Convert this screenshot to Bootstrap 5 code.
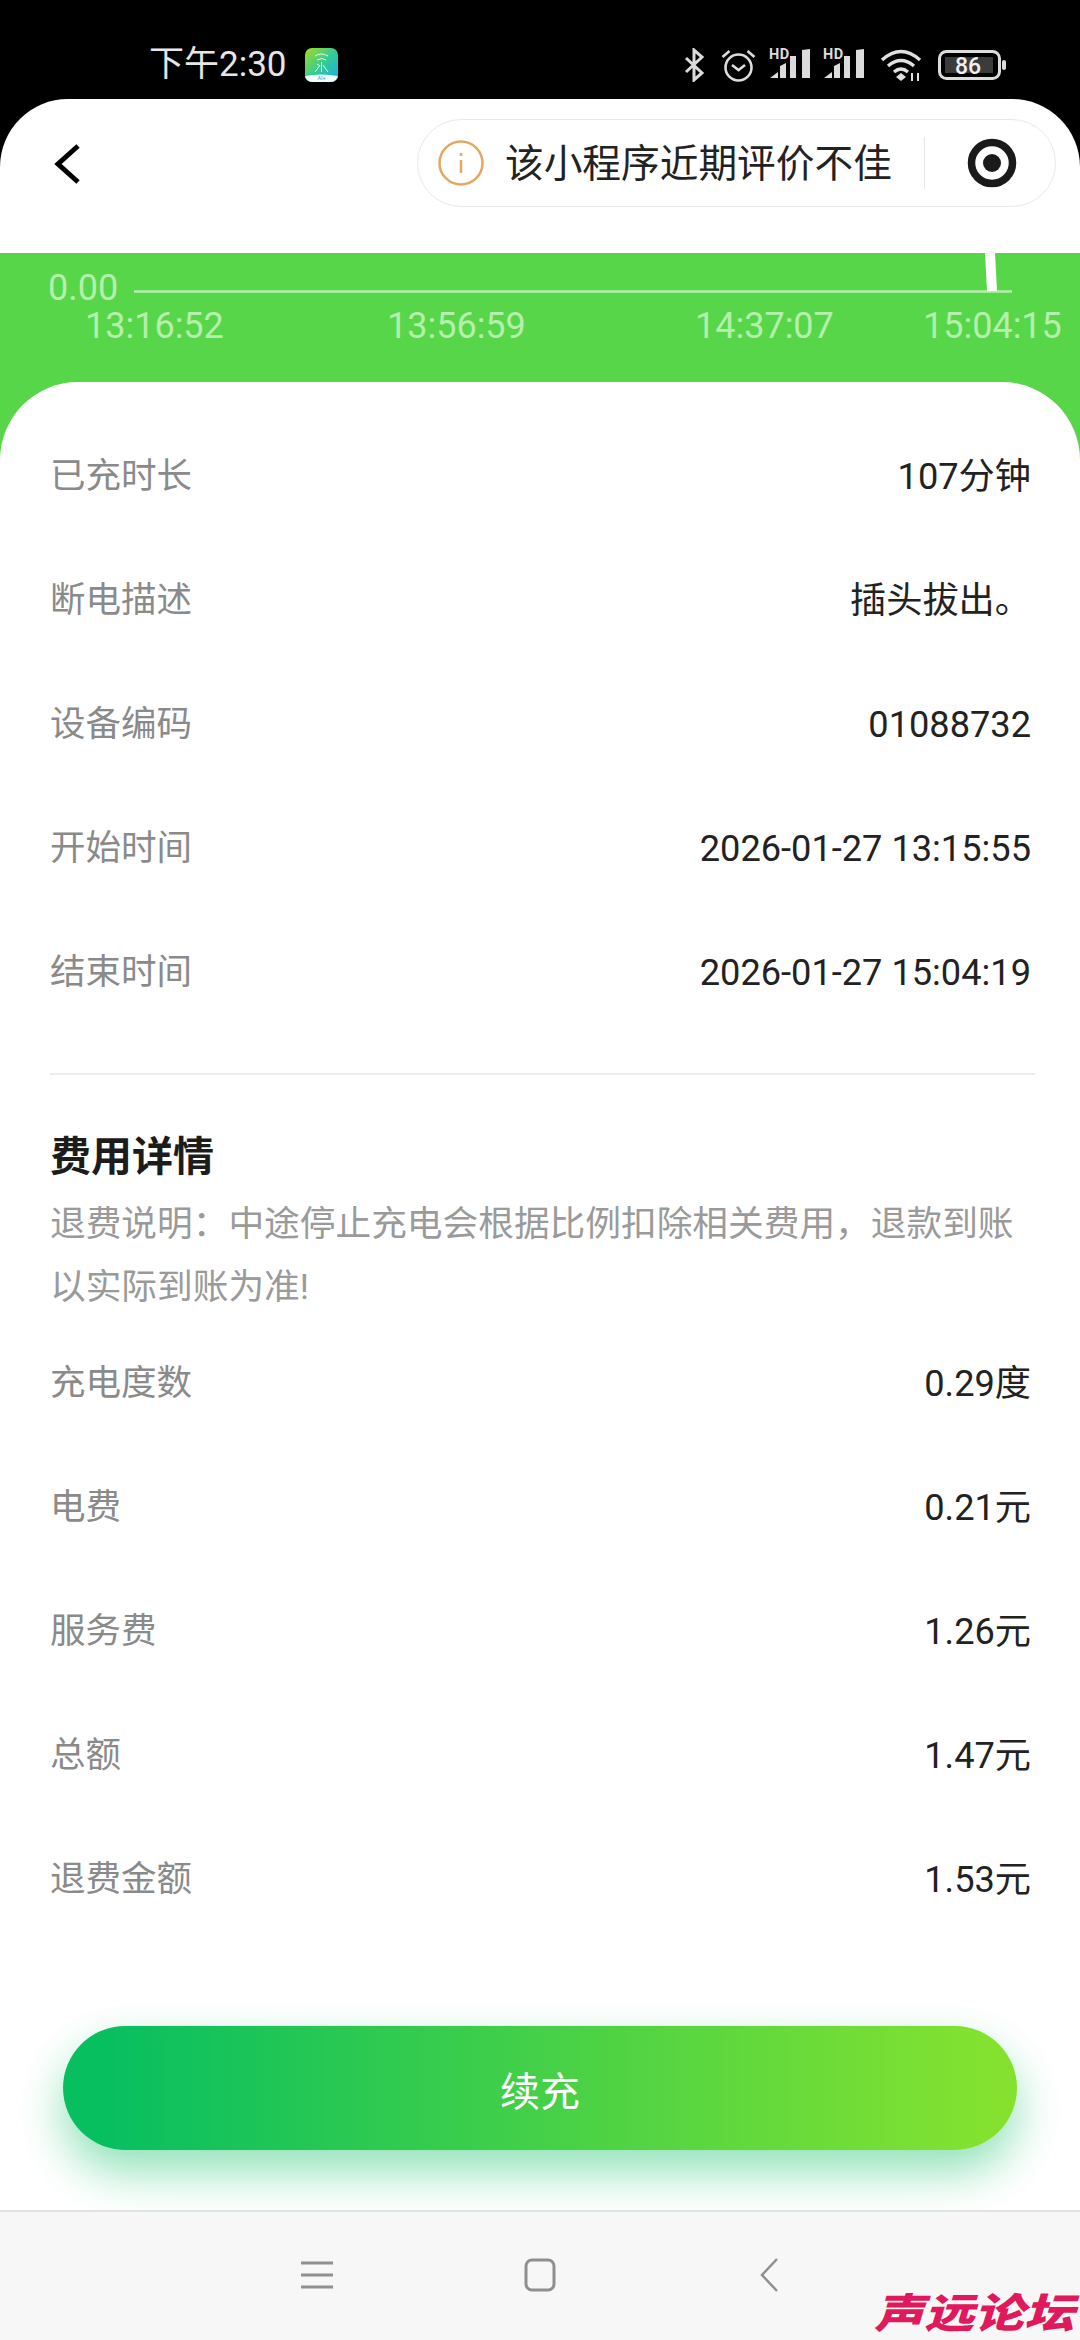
<!DOCTYPE html>
<html lang="zh">
<head>
    <meta charset="UTF-8">
    <title>订单详情</title>
    <meta name="viewport" content="width=device-width, initial-scale=1">
    <link href="https://cdn.jsdelivr.net/npm/bootstrap@5.3.3/dist/css/bootstrap.min.css" rel="stylesheet">
    <style>
        body { width: 1080px; height: 2340px; overflow: hidden; background: #000; font-family: Roboto, "Noto Sans CJK SC", sans-serif; }
        .status-bar { height: 99px; padding: 30px 73px 0 149px; color: #e6e6e6; }
        .status-time { font-size: 35px; line-height: 1; width: 156px; }
        .status-icons svg { display: block; }
        .status-icons svg:nth-child(2) { margin-left: 16px; }
        .status-icons svg:nth-child(3) { margin-left: 13px; margin-bottom: 3px; }
        .status-icons svg:nth-child(4) { margin-left: 12px; margin-bottom: 3px; }
        .status-icons svg:nth-child(5) { margin-left: 15px; }
        .status-icons svg:nth-child(6) { margin-left: 14px; }
        .top-bar { height: 154px; background: #fff; border-radius: 68px 68px 0 0; padding: 20px 24px 0 54px; align-items: flex-start; }
        .back-btn { margin-top: 25px; }
        .capsule { width: 639px; height: 88px; border: 1px solid #e9e9e9; border-radius: 44px; background: #fff; padding-left: 20px; }
        .capsule-text { font-size: 38.7px; color: #222; margin: 2px 0 0 21px; white-space: nowrap; line-height: 1; }
        .capsule-sep { width: 1px; height: 52px; background: #e6e6e6; margin-left: 32px; }
        .capsule-dot { margin-left: 42px; }
        .green-wrap { background: #58d64a; }
        .chart-box { height: 129px; }
        .chart-box svg { display: block; }
        .chart-label { font-size: 36px; fill: #b6efad; font-family: Roboto, sans-serif; }
        .sheet { height: 1828px; background: #fff; border-radius: 78px 78px 0 0; padding: 33px 49px 0 50px; }
        .info-row { height: 124px; font-size: 36.2px; color: #222; }
        .info-label { color: #8a8a8a; font-size: 35.5px; }
        .sheet-line { height: 2px; background: #ececec; margin: 38px -4px 0 0; }
        .fee-title { font-size: 41px; font-weight: 700; color: #1c1c1c; line-height: 60px; margin-top: 52px; }
        .fee-note { font-size: 35.7px; line-height: 63px; color: #9a9a9a; margin: 6px -8px 3px 0; }
        .renew-btn { width: 954px; height: 124px; margin: 84px 0 0 13px; padding-top: 15px; font-size: 40px; color: #fff; border: 0; background: linear-gradient(90deg, #08bf60 5%, #84e22f 97%); box-shadow: 0 22px 46px rgba(12, 190, 100, .45); }
        .renew-btn:hover { color: #fff; }
        .nav-strip { height: 130px; background: #f7f7f7; border-top: 2px solid #dfe3e3; padding-bottom: 2px; position: relative; }
        .nav-home { margin-left: 191px; }
        .nav-back { margin-left: 203px; }
        .forum-mark { position: absolute; right: 6px; bottom: 5px; font-size: 50px; line-height: 50px; font-weight: 900; font-style: italic; color: #e0185c; white-space: nowrap; transform: scaleY(.82); transform-origin: bottom; }
    </style>
</head>
<body class="position-relative">
    <!-- status bar -->
    <div class="status-bar d-flex align-items-center">
        <span class="status-time">下午2:30</span>
        <svg width="33" height="34" viewBox="0 0 33 34">
            <defs>
                <linearGradient id="appg" x1="0" y1="0" x2="1" y2="1">
                    <stop offset="0" stop-color="#a4dc1e"/>
                    <stop offset=".5" stop-color="#35cc94"/>
                    <stop offset="1" stop-color="#14aaf2"/>
                </linearGradient>
                <clipPath id="appc"><rect width="33" height="34" rx="7"/></clipPath>
            </defs>
            <g clip-path="url(#appc)">
                <rect width="33" height="34" fill="url(#appg)"/>
                <path d="M0 28q16-3 33 0v6H0z" fill="#f2fbfd"/>
            </g>
            <g fill="none" stroke="#e6f8ee" stroke-width="1">
                <path d="M10 8q6-4 13 0M12 12q5-3 9 0M16.500 14v10M15 17l-5 7M18 17l5 7M12 16l3 2"/>
            </g>
            <text x="16.500" y="32" text-anchor="middle" font-size="5.500" fill="#3aa6c8" font-family="Roboto, sans-serif">AI+</text>
        </svg>
        <div class="status-icons d-flex align-items-center ms-auto">
            <svg width="21" height="34" viewBox="0 0 21 34" fill="none" stroke="#dcdcdc" stroke-width="3">
                <path d="M2 10l16 15-8 7V2l8 7L2 24"/>
            </svg>
            <svg width="35" height="34" viewBox="0 0 35 34" fill="none" stroke="#dcdcdc" stroke-width="2.600">
                <circle cx="17.500" cy="19.500" r="13"/>
                <path d="M11 17l6.500 5 6.500-5M1.500 9l7-6M33.500 9l-7-6"/>
            </svg>
            <svg width="42" height="40" viewBox="0 -5 42 40">
                <text x="0" y="11" font-size="14.500" font-weight="700" fill="#dcdcdc" font-family="Roboto, sans-serif" letter-spacing=".5">HD</text>
                <path d="M1 30l8-6v6zM11 30V18l6-3v15zM21 30V8h6v22zM33 30V2l8-1v29z" fill="#dcdcdc"/>
            </svg>
            <svg width="42" height="40" viewBox="0 -5 42 40">
                <text x="0" y="11" font-size="14.500" font-weight="700" fill="#dcdcdc" font-family="Roboto, sans-serif" letter-spacing=".5">HD</text>
                <path d="M1 30l8-6v6zM11 30V18l6-3v15zM21 30V8h6v22zM33 30V2l8-1v29z" fill="#dcdcdc"/>
            </svg>
            <svg width="44" height="34" viewBox="0 0 44 34" fill="none" stroke="#e0e0e0" stroke-width="3.400">
                <path d="M2 12q19-17 38 0M8 18q13-11 26 0M14 24q7-6 14 0"/>
                <path d="M21 25l5 4-5 4-5-4z" fill="#e0e0e0" stroke="none"/>
                <path d="M32 25v8M38 25v8" stroke-width="2"/>
            </svg>
            <svg width="69" height="30" viewBox="0 0 69 30">
                <rect x="1.500" y="1.500" width="60" height="27" rx="7" fill="none" stroke="#dcdcdc" stroke-width="3"/>
                <rect x="7" y="7" width="48" height="16" fill="#3b3b3b"/>
                <text x="30" y="24" text-anchor="middle" font-size="23" font-weight="500" fill="#f0f0f0" font-family="Roboto, sans-serif">86</text>
                <rect x="64" y="10" width="4" height="10" rx="2" fill="#dcdcdc"/>
            </svg>
        </div>
    </div>

    <!-- mini program title bar -->
    <div class="top-bar d-flex justify-content-between">
        <svg class="back-btn" width="26" height="40" viewBox="0 0 26 40" fill="none" stroke="#000" stroke-width="5">
            <path d="M24 2L4 20l20 18"/>
        </svg>
        <div class="capsule d-flex align-items-center">
            <svg width="46" height="46" viewBox="0 0 46 46" fill="none" stroke="#e2a864" stroke-width="2.500">
                <circle cx="23" cy="23" r="21.500"/>
                <path d="M23 20v13M23 13v3"/>
            </svg>
            <span class="capsule-text">该小程序近期评价不佳</span>
            <span class="capsule-sep"></span>
            <svg class="capsule-dot" width="50" height="50" viewBox="0 0 50 50">
                <circle cx="25" cy="25" r="20.500" fill="none" stroke="#1a1a1a" stroke-width="7.500"/>
                <circle cx="25" cy="25" r="9" fill="#1a1a1a"/>
            </svg>
        </div>
    </div>

    <div class="green-wrap">
        <!-- chart -->
        <div class="chart-box">
            <svg width="1080" height="129" viewBox="0 0 1080 129">
                <text class="chart-label" x="48" y="47">0.00</text>
                <path d="M134 38.500H1012" stroke="#b6efad" stroke-width="2.500"/>
                <path d="M990 0l2 38" stroke="#fff" stroke-width="10"/>
                <text class="chart-label" x="85" y="85">13:16:52</text>
                <text class="chart-label" x="387" y="85">13:56:59</text>
                <text class="chart-label" x="695" y="85">14:37:07</text>
                <text class="chart-label" x="923" y="85">15:04:15</text>
            </svg>
        </div>

        <div class="sheet">
            <div class="info-row d-flex justify-content-between align-items-center"><span class="info-label">已充时长</span><span>107分钟</span></div>
            <div class="info-row d-flex justify-content-between align-items-center"><span class="info-label">断电描述</span><span>插头拔出。</span></div>
            <div class="info-row d-flex justify-content-between align-items-center"><span class="info-label">设备编码</span><span>01088732</span></div>
            <div class="info-row d-flex justify-content-between align-items-center"><span class="info-label">开始时间</span><span>2026-01-27 13:15:55</span></div>
            <div class="info-row d-flex justify-content-between align-items-center"><span class="info-label">结束时间</span><span>2026-01-27 15:04:19</span></div>

            <div class="sheet-line"></div>

            <div class="fee-title">费用详情</div>
            <div class="fee-note">退费说明&#xFF1A;中途停止充电会根据比例扣除相关费用&#xFF0C;退款到账以实际到账为准!</div>

            <div class="info-row d-flex justify-content-between align-items-center"><span class="info-label">充电度数</span><span>0.29度</span></div>
            <div class="info-row d-flex justify-content-between align-items-center"><span class="info-label">电费</span><span>0.21元</span></div>
            <div class="info-row d-flex justify-content-between align-items-center"><span class="info-label">服务费</span><span>1.26元</span></div>
            <div class="info-row d-flex justify-content-between align-items-center"><span class="info-label">总额</span><span>1.47元</span></div>
            <div class="info-row d-flex justify-content-between align-items-center"><span class="info-label">退费金额</span><span>1.53元</span></div>

            <button type="button" class="btn renew-btn rounded-pill d-flex align-items-center justify-content-center">续充</button>
        </div>
    </div>

    <!-- phone nav bar -->
    <div class="nav-strip d-flex align-items-center justify-content-center">
        <svg width="32" height="28" viewBox="0 0 32 28" stroke="#8f8f8f" stroke-width="3">
            <path d="M0 2h32M0 14h32M0 26h32"/>
        </svg>
        <svg class="nav-home" width="32" height="34" viewBox="0 0 32 34" fill="none" stroke="#8f8f8f" stroke-width="3">
            <rect x="2" y="2" width="28" height="30" rx="6"/>
        </svg>
        <svg class="nav-back" width="20" height="34" viewBox="0 0 20 34" fill="none" stroke="#8f8f8f" stroke-width="2.500">
            <path d="M18 1L3 17l15 16"/>
        </svg>
        <div class="forum-mark">声远论坛</div>
    </div>

    <script src="https://cdn.jsdelivr.net/npm/bootstrap@5.3.3/dist/js/bootstrap.bundle.min.js"></script>
</body>
</html>
